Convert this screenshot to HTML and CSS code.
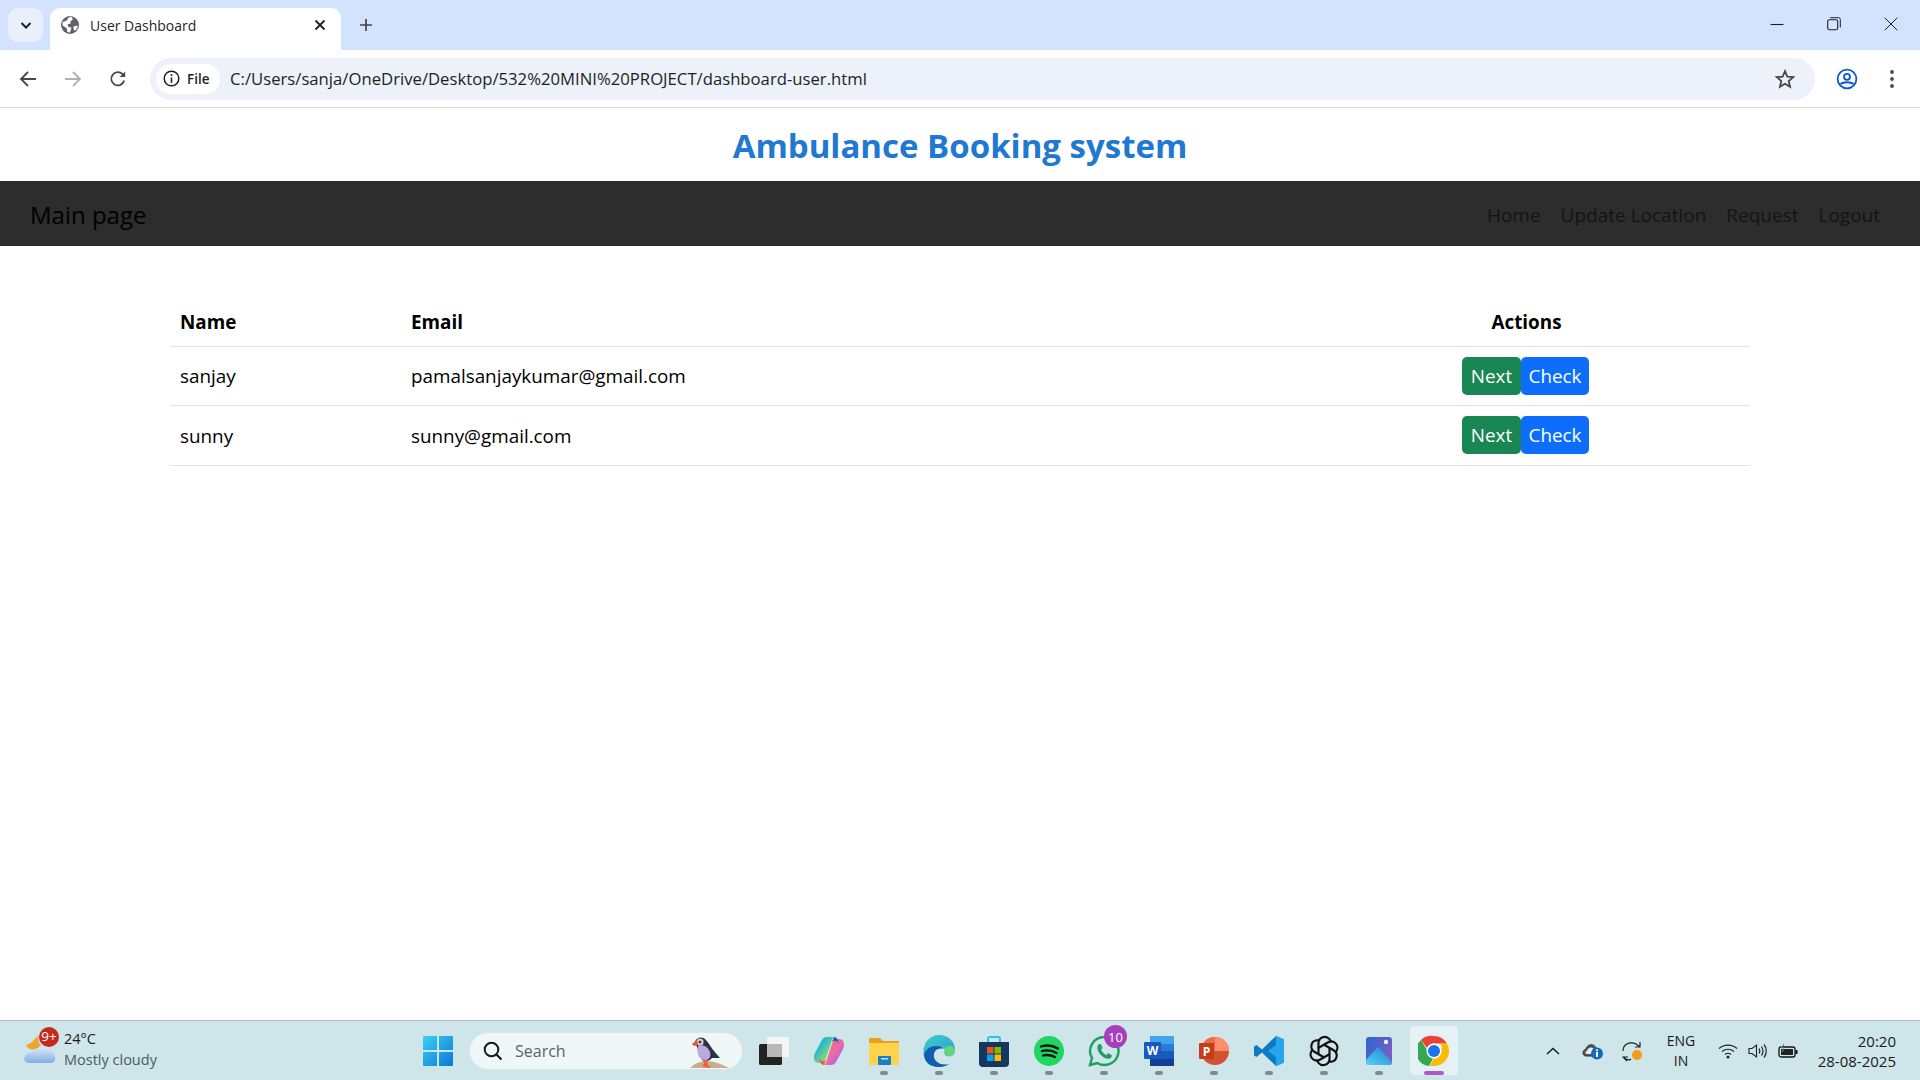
FILE: index.html
```html
<!DOCTYPE html>
<html lang="en">
<head>
<meta charset="utf-8">
<title>User Dashboard</title>
<link rel="stylesheet" href="styles.css">
</head>
<body>
<div class="window">
  <div class="tabstrip">
    <button class="tab-search"><svg width="14" height="14" viewBox="0 0 14 14"><path d="M2.5 5 7 9.5 11.5 5" fill="none" stroke="#1f1f1f" stroke-width="2"/></svg></button>
    <div class="tab">
      <svg class="favicon" width="18" height="18" viewBox="0 0 18 18"><circle cx="9" cy="9" r="9" fill="#5f6368"/><path d="M1.5 6 6 4.5 7 2 10 .5 12 3 9.5 5.5 9.5 7.5 6.5 8.5 7.5 11 10.5 11.5 9 16.5 6.5 16 5.5 12 1.5 9.5ZM12.5 10.5 16.5 9.5 16.5 11.5 14 15 12.5 13Z" fill="#fff"/></svg>
      <span class="tab-title">User Dashboard</span>
      <svg class="tab-close" width="12" height="12" viewBox="0 0 12 12"><path d="M1.5 1.5 10.5 10.5M10.5 1.5 1.5 10.5" stroke="#1f1f1f" stroke-width="1.8"/></svg>
    </div>
    <svg class="newtab" width="14" height="14" viewBox="0 0 14 14"><path d="M7 1V13M1 7H13" stroke="#444" stroke-width="1.7"/></svg>
    <div class="winctl">
      <svg width="14" height="14" viewBox="0 0 14 14"><path d="M.5 7.5H13.5" stroke="#1f1f1f" stroke-width="1.1"/></svg>
      <svg width="14" height="14" viewBox="0 0 14 14"><rect x=".7" y="2.7" width="10" height="10" rx="1.6" fill="none" stroke="#1f1f1f" stroke-width="1.1"/><path d="M3.2 .7H11.5A1.8 1.8 0 0 1 13.3 2.5V10.5" fill="none" stroke="#1f1f1f" stroke-width="1"/></svg>
      <svg width="14" height="14" viewBox="0 0 14 14"><path d="M.7.7 13.3 13.3M13.3.7.7 13.3" stroke="#1f1f1f" stroke-width="1"/></svg>
    </div>
  </div>
  <div class="toolbar">
    <div class="navbtns">
      <svg width="18" height="18" viewBox="0 0 18 18"><path d="M17 9H2M9 2 2 9l7 7" fill="none" stroke="#474747" stroke-width="1.8"/></svg>
      <svg width="18" height="18" viewBox="0 0 18 18"><path d="M1 9H16M9 2l7 7-7 7" fill="none" stroke="#b0b0b0" stroke-width="1.8"/></svg>
      <svg width="18" height="18" viewBox="0 0 18 18"><path d="M15.2 10.6A6.6 6.6 0 1 1 13.6 4.2L15.5 6" fill="none" stroke="#474747" stroke-width="1.8"/><path d="M16.2 1.5V7H10.7Z" fill="#474747"/></svg>
    </div>
    <div class="omnibox">
      <div class="chip">
        <svg width="17" height="17" viewBox="0 0 17 17"><circle cx="8.5" cy="8.5" r="7.3" fill="none" stroke="#1f1f1f" stroke-width="1.5"/><path d="M8.5 7.5V12.8" stroke="#1f1f1f" stroke-width="1.6"/><circle cx="8.5" cy="5" r="1" fill="#1f1f1f"/></svg>
        <span class="chip-label">File</span>
      </div>
      <span class="url">C:/Users/sanja/OneDrive/Desktop/532%20MINI%20PROJECT/dashboard-user.html</span>
      <svg class="star" width="20" height="20" viewBox="0 0 20 20"><path d="M10 2.2 12.3 7.6 18.2 8.1 13.7 12 15.1 17.8 10 14.7 4.9 17.8 6.3 12 1.8 8.1 7.7 7.6Z" fill="none" stroke="#474747" stroke-width="1.8"/></svg>
    </div>
    <svg class="profile" width="22" height="22" viewBox="0 0 22 22"><circle cx="11" cy="11" r="9.4" fill="none" stroke="#0b57d0" stroke-width="1.8"/><circle cx="11" cy="8.8" r="3" fill="none" stroke="#0b57d0" stroke-width="1.8"/><path d="M4.5 16.2C7 13.6 15 13.6 17.5 16.2" fill="none" stroke="#0b57d0" stroke-width="1.8"/></svg>
    <svg class="kebab" width="6" height="20" viewBox="0 0 6 20"><circle cx="3" cy="3" r="1.9" fill="#474747"/><circle cx="3" cy="10" r="1.9" fill="#474747"/><circle cx="3" cy="17" r="1.9" fill="#474747"/></svg>
  </div>

  <main class="page">
    <h1 class="site-title">Ambulance Booking system</h1>
    <nav class="navbar">
      <a class="brand">Main page</a>
      <div class="nav-links">
        <a>Home</a><a>Update Location</a><a>Request</a><a>Logout</a>
      </div>
    </nav>
    <div class="table-wrap">
      <table class="users">
        <thead>
          <tr><th class="c-name">Name</th><th class="c-email">Email</th><th class="c-actions">Actions</th></tr>
        </thead>
        <tbody>
          <tr><td>sanjay</td><td>pamalsanjaykumar@gmail.com</td><td class="actions"><button class="btn green">Next</button><button class="btn blue">Check</button></td></tr>
          <tr><td>sunny</td><td>sunny@gmail.com</td><td class="actions"><button class="btn green">Next</button><button class="btn blue">Check</button></td></tr>
        </tbody>
      </table>
    </div>
  </main>

  <footer class="taskbar">
    <div class="weather">
      <div class="weather-icon">
        <svg width="36" height="30" viewBox="0 0 36 30"><defs><linearGradient id="cl" x1="0" y1="0" x2="0" y2="1"><stop offset="0" stop-color="#d3e4f8"/><stop offset="1" stop-color="#86ade6"/></linearGradient></defs><path d="M17 0C13 3 12 6 7 9L4 10C7 16 14 16 19 10 16 8 16 4 17 0Z" fill="#f0a32f"/><path d="M8 28C3 28 1 25 3 21 4 18 7 17 10 17 12 13 19 12 23 15 27 14 32 17 33 22 34 26 31 28 28 28Z" fill="url(#cl)"/></svg>
        <span class="w-badge">9+</span>
      </div>
      <div class="w-text"><span class="w-temp">24°C</span><span class="w-desc">Mostly cloudy</span></div>
    </div>
    <svg class="start" width="30" height="30" viewBox="0 0 30 30"><defs><linearGradient id="wg" x1="0" y1="0" x2="1" y2="1"><stop offset="0" stop-color="#3bd0f7"/><stop offset="1" stop-color="#0a76d3"/></linearGradient></defs><path d="M1 0H14V14H0V1A1 1 0 0 1 1 0ZM16 0H29A1 1 0 0 1 30 1V14H16ZM0 16H14V30H1A1 1 0 0 1 0 29ZM16 16H30V29A1 1 0 0 1 29 30H16Z" fill="url(#wg)"/></svg>
    <div class="search">
      <svg width="20" height="20" viewBox="0 0 20 20"><circle cx="8.500" cy="8.500" r="6.800" fill="none" stroke="#1a1a1a" stroke-width="2"/><path d="M13.500 13.500 18.500 18.500" stroke="#1a1a1a" stroke-width="2.200"/></svg>
      <span class="search-label">Search</span>
      <svg class="puffin" width="40" height="36" viewBox="0 0 40 36"><path d="M0 35C5 30 10 28 17 28 25 28 33 32 39 35Z" fill="#c9ad8f"/><path d="M5 9C6 4 13 3 16 7 20 12 24 19 30 25L22 25C20 28 15 29 12 27Z" fill="#2b3346"/><path d="M8 13C6 20 9 27 15 27 20 27 22 22 19 17 17 13 12 11 8 13Z" fill="#b9a9e0"/><circle cx="10" cy="9" r="3.600" fill="#d9c9cf"/><circle cx="10" cy="9" r="1.300" fill="#4a2430"/><path d="M7 7 2 11 4 13 8 12Z" fill="#e8562e"/><path d="M13 27H17L18 33H21L19 35 12 33 14 31Z" fill="#ef5f33"/></svg>
    </div>
    <div class="apps">
      <div class="app"><svg width="30" height="28" viewBox="0 0 30 28"><rect x="0" y="7" width="23" height="21" rx="1.500" fill="#232323"/><rect x="8" y="0" width="22" height="20" rx="1.500" fill="#f5f5f5"/><rect x="8" y="7" width="15" height="13" fill="#b9b9b9"/></svg></div>
      <div class="app"><svg width="30" height="28" viewBox="0 0 30 28"><defs><linearGradient id="cp1" x1="0" y1="0" x2="1" y2="1"><stop offset="0" stop-color="#1f6fe0"/><stop offset=".3" stop-color="#21b6d8"/><stop offset=".6" stop-color="#6fd08a"/><stop offset="1" stop-color="#f4d23c"/></linearGradient><linearGradient id="cp2" x1="0" y1="0" x2="1" y2="1"><stop offset="0" stop-color="#8d5cf0"/><stop offset=".5" stop-color="#ee6aa8"/><stop offset="1" stop-color="#f2743a"/></linearGradient></defs><path d="M8 3C9 1 11 0 13 0H20C18 1 18 3 17 6L12 21C11 25 8 26 5 26 1 26 0 23 0 20 0 18 1 16 2 14Z" fill="url(#cp1)"/><path d="M8 3C9 1 11 0 13 0H20C18 1 18 3 17 6L12 21C11 25 8 26 5 26 1 26 0 23 0 20 0 18 1 16 2 14Z" fill="url(#cp2)" transform="rotate(180 15 14)"/><path d="M20 0C23 0 24 3 25 7 23 3 20 3 18 5Z" fill="#1c55c8"/><path d="M10 28C7 28 6 25 5 21 7 25 10 25 12 23Z" fill="#ee5a30"/></svg></div>
      <div class="app run"><svg width="32" height="32" viewBox="0 0 32 32"><path d="M1 3H12L15 6H31V11H1Z" fill="#e8a21a"/><path d="M1 8H31V30H1Z" fill="#fdd34d"/><rect x="10" y="21" width="13" height="9" rx="1" fill="#1b7dc4"/><rect x="13" y="23" width="7" height="1.500" fill="#bfe1f7"/></svg></div>
      <div class="app run"><svg width="32" height="32" viewBox="0 0 32 32"><defs><linearGradient id="edg" x1="0" y1="0" x2="1" y2="1"><stop offset="0" stop-color="#3ad0c7"/><stop offset="1" stop-color="#2e9bd9"/></linearGradient></defs><path d="M16 0C25 0 32 6 32 15 32 21 27 22 24 21 21 20 21 17 22 15 20 11 15 9 10 11 5 13 2 18 1 22 -2 10 6 0 16 0Z" fill="url(#edg)"/><path d="M1 20C3 11 16 7 21 14 14 12 10 17 11 22 12 27 18 31 26 29 20 34 2 34 1 20Z" fill="#0f5fae"/><path d="M21 14C22 17 22 20 25 21 28 22 32 20 32 15 29 8 23 11 21 14Z" fill="#63d676"/></svg></div>
      <div class="app run"><svg width="30" height="32" viewBox="0 0 30 32"><path d="M9 8V4A2 2 0 0 1 11 2H19A2 2 0 0 1 21 4V8" fill="none" stroke="#2bc3ee" stroke-width="2"/><path d="M0 7H30V28A4 4 0 0 1 26 32H4A4 4 0 0 1 0 28Z" fill="#14365f"/><rect x="8" y="12" width="6.500" height="6.500" fill="#f25022"/><rect x="15.500" y="12" width="6.500" height="6.500" fill="#7fba00"/><rect x="8" y="19.500" width="6.500" height="6.500" fill="#00a4ef"/><rect x="15.500" y="19.500" width="6.500" height="6.500" fill="#ffb900"/></svg></div>
      <div class="app run"><svg width="30" height="30" viewBox="0 0 30 30"><circle cx="15" cy="15" r="15" fill="#1ed760"/><path d="M7 10.500C12 9 19 9.500 24 12.500M8 15C12 14 18 14.300 22.500 17M9 19.500C13 18.500 17 19 21 21" fill="none" stroke="#111" stroke-width="2.300" stroke-linecap="round"/></svg></div>
      <div class="app run"><svg width="32" height="32" viewBox="0 0 32 32"><path d="M16 2A14 14 0 0 0 4 23L2 30 9.300 28A14 14 0 1 0 16 2Z" fill="none" stroke="#1f9d64" stroke-width="2.400"/><path d="M11 9C8.500 11 9 15 12 19 15 23 19 24.500 22 23.500 24 22.500 24 20.500 23.500 20L20 18 18.500 20C16.500 19.500 14 17 13 14.500L14.500 13 13 9.300Z" fill="#1f9d64"/></svg><span class="app-badge">10</span></div>
      <div class="app run"><svg width="30" height="32" viewBox="0 0 30 32"><rect x="6" y="1" width="24" height="30" rx="1" fill="#2b7cd3"/><rect x="6" y="1" width="24" height="8" fill="#41a5ee"/><rect x="6" y="16" width="24" height="8" fill="#185abd"/><rect x="6" y="24" width="24" height="7" fill="#103f91"/><rect x="0" y="7" width="17" height="17" rx="1" fill="#185abd"/><text x="8.500" y="20" class="icon-letter">W</text></svg></div>
      <div class="app run"><svg width="30" height="32" viewBox="0 0 30 32"><circle cx="16" cy="16" r="14" fill="#d35230"/><path d="M16 2A14 14 0 0 1 30 16H16Z" fill="#ff8f6b"/><path d="M16 2A14 14 0 0 0 2 16H16Z" fill="#ed6c47"/><rect x="0" y="8" width="15" height="16" rx="1" fill="#c43e1c"/><text x="7.500" y="20.500" class="icon-letter">P</text></svg></div>
      <div class="app run"><svg width="30" height="32" viewBox="0 0 30 32"><path d="M22 1 30 4.500V27.500L22 31 8 17.500 2.500 22 0 20.500V11.500L2.500 10 8 14.500Z" fill="#0d7ac4"/><path d="M22 1 30 4.500V27.500L22 31V22L14 16 22 10Z" fill="#25a5ec"/></svg></div>
      <div class="app run"><svg width="32" height="32" viewBox="0 0 32 32"><g fill="none" stroke="#111" stroke-width="2.100" stroke-linecap="round"><path d="M10.500 19V8A6.200 6.200 0 0 1 21.500 4.200L23 6.500"/><path d="M10.500 19V8A6.200 6.200 0 0 1 21.500 4.200L23 6.500" transform="rotate(60 16 16)"/><path d="M10.500 19V8A6.200 6.200 0 0 1 21.500 4.200L23 6.500" transform="rotate(120 16 16)"/><path d="M10.500 19V8A6.200 6.200 0 0 1 21.500 4.200L23 6.500" transform="rotate(180 16 16)"/><path d="M10.500 19V8A6.200 6.200 0 0 1 21.500 4.200L23 6.500" transform="rotate(240 16 16)"/><path d="M10.500 19V8A6.200 6.200 0 0 1 21.500 4.200L23 6.500" transform="rotate(300 16 16)"/></g></svg></div>
      <div class="app run"><svg width="26" height="28" viewBox="0 0 26 28"><defs><linearGradient id="ph" x1="0" y1="0" x2="1" y2=".7"><stop offset="0" stop-color="#2a66cf"/><stop offset="1" stop-color="#7e5cc6"/></linearGradient><linearGradient id="ph2" x1="0" y1="1" x2="1" y2="0"><stop offset="0" stop-color="#55d3f2"/><stop offset="1" stop-color="#1f7fd8"/></linearGradient></defs><rect width="26" height="28" rx="3" fill="url(#ph)"/><circle cx="20" cy="5" r="2.200" fill="#f0f0f8"/><path d="M0 23 12 10 26 25A3 3 0 0 1 23 28H3A3 3 0 0 1 0 25Z" fill="url(#ph2)"/></svg></div>
      <div class="app active"><svg width="32" height="32" viewBox="0 0 32 32"><path d="M16 1A15 15 0 0 1 29 8.500H16A7.500 7.500 0 0 0 9 13L3 4.900A15 15 0 0 1 16 1Z" fill="#ea4335"/><path d="M3 4.900 9.500 16A6.500 6.500 0 0 0 15 23.500L11 31A15 15 0 0 1 3 4.900Z" fill="#34a853"/><path d="M29 8.500A15 15 0 0 1 16 31H11.500L18 20A7 7 0 0 0 22 8.500Z" fill="#fbbc04"/><circle cx="16" cy="16" r="7.500" fill="#fff"/><circle cx="16" cy="16" r="6" fill="#1a73e8"/></svg></div>
    </div>
    <div class="tray">
      <div class="tray-slot"><svg width="14" height="8" viewBox="0 0 14 8"><path d="M1 7 7 1.500 13 7" fill="none" stroke="#1a1a1a" stroke-width="1.500"/></svg></div>
      <div class="tray-slot"><svg width="22" height="18" viewBox="0 0 22 18"><path d="M4 14C0 14 0 8 4 7 5 2 12 1 14 6 15 6 16 7 16 8V14Z" fill="#555" stroke="#333"/><path d="M5 12C3 12 3 9 5 9 6 5 11 4 12 8V12Z" fill="#eee"/><circle cx="15" cy="11.500" r="6" fill="#0f6cbd"/><rect x="14" y="10" width="2" height="5" fill="#fff"/><rect x="14" y="7.500" width="2" height="1.700" fill="#fff"/></svg></div>
      <div class="tray-slot"><svg width="22" height="22" viewBox="0 0 22 22"><path d="M1 11C1 4 8 1 14 4L18 7M18 2V7H13" fill="none" stroke="#222" stroke-width="1.200"/><path d="M5 21 1 17H6M1 17 4 19C6 20 8 20 9 19" fill="none" stroke="#222" stroke-width="1.200"/><circle cx="15" cy="15" r="5" fill="#f59a14"/></svg></div>
      <div class="tray-lang"><span>ENG</span><span>IN</span></div>
      <div class="tray-icon"><svg width="20" height="16" viewBox="0 0 20 16"><path d="M1 5.500C6 1 14 1 19 5.500M4 8.500C7.500 5.500 12.500 5.500 16 8.500M7 11.500C8.800 10 11.200 10 13 11.500" fill="none" stroke="#222" stroke-width="1.200"/><circle cx="10" cy="14" r="1.500" fill="#222"/></svg></div>
      <div class="tray-icon"><svg width="20" height="16" viewBox="0 0 20 16"><path d="M1 5.500H4L8.500 2V14L4 10.500H1Z" fill="none" stroke="#222" stroke-width="1.100"/><path d="M11 5.500C12 7 12 9 11 10.500M13.500 3.500C15.500 6 15.500 10 13.500 12.500M16 1.500C19 5 19 11 16 14.500" fill="none" stroke="#222" stroke-width="1.200"/></svg></div>
      <div class="tray-icon"><svg width="20" height="16" viewBox="0 0 20 16"><rect x="1" y="4" width="16" height="10" rx="2" fill="none" stroke="#111" stroke-width="1.300"/><rect x="3" y="6" width="12" height="6" fill="#222"/><rect x="17.500" y="7" width="2" height="4" fill="#111"/><path d="M6 0 3 5H6L4 9" fill="#111" stroke="#cee5ea" stroke-width=".6"/></svg></div>
      <div class="clock"><span>20:20</span><span>28-08-2025</span></div>
    </div>
  </footer>
</div>
</body>
</html>
```
FILE: styles.css
```css
* { box-sizing: border-box; }
html, body { margin: 0; padding: 0; height: 100%; }
body { font-family: "Open Sans", "Noto Sans", sans-serif; color: #000; background: #fff; overflow: hidden; }
.window { display: flex; flex-direction: column; height: 1080px; }

/* browser chrome */
.tabstrip { display: flex; align-items: flex-end; height: 50px; background: #d3e3fd; flex: none; }
.tab-search { width: 35px; height: 34px; margin: 0 7px 8px 8px; padding: 0; border: 0; border-radius: 10px; background: #e9f0fc; display: flex; align-items: center; justify-content: center; }
.tab { width: 291px; height: 42px; background: #fff; border-radius: 10px 10px 0 0; display: flex; align-items: center; padding: 0 15px 8px 11px; margin-right: 18px; }
.favicon { flex: none; margin-right: 11px; }
.tab-title { font-size: 14px; color: #1f1f1f; white-space: nowrap; flex: 1; }
.tab-close { flex: none; }
.newtab { margin-bottom: 18px; flex: none; }
.winctl { margin-left: auto; display: flex; gap: 43px; padding-right: 22px; align-self: flex-start; padding-top: 17px; }
.winctl svg { display: block; }

.toolbar { height: 58px; background: #fff; border-bottom: 1px solid #dcdcdc; flex: none; display: flex; align-items: center; border-radius: 10px 10px 0 0; padding-left: 19px; }
.navbtns { display: flex; gap: 27px; margin-right: 23px; }
.navbtns svg { display: block; }
.omnibox { width: 1665px; height: 42px; border-radius: 21px; background: #ecf1fa; display: flex; align-items: center; padding: 0 20px 0 6px; flex: none; }
.chip { width: 64px; height: 30px; border-radius: 15px; background: #fff; display: flex; align-items: center; padding-left: 7px; gap: 7px; flex: none; }
.chip-label { font-size: 13.500px; font-weight: 600; color: #1f1f1f; }
.url { font-size: 16.700px; color: #1f1f1f; margin-left: 10px; white-space: nowrap; flex: 1; }
.star { flex: none; }
.profile { margin-left: 21px; flex: none; }
.kebab { margin-left: 31px; flex: none; }

/* page */
.page { flex: 1; background: #fff; min-height: 0; }
.site-title { margin: 0; height: 73px; padding-top: 2px; display: flex; align-items: center; justify-content: center; font-size: 33px; font-weight: 700; color: #1f78d1; line-height: 1; }
.navbar { height: 65px; background: #2d2d2d; display: flex; align-items: center; justify-content: space-between; padding: 0 40px 0 30px; }
.brand { font-size: 24px; color: #000; padding-top: 1px; }
.nav-links { display: flex; gap: 20px; padding-top: 2px; }
.nav-links a { font-size: 19px; color: #141414; }
.table-wrap { padding: 46px 170px 0; }
.users { width: 100%; border-collapse: collapse; font-size: 18.850px; table-layout: fixed; }
.users th { font-weight: 700; text-align: left; padding: 6px 10px 0; height: 54px; border-bottom: 1.500px solid #dee2e6; }
.users td { padding: 1px 10px 0; height: 59.500px; border-bottom: 1.500px solid #dee2e6; vertical-align: middle; }
.c-name { width: 231px; }
.c-email { width: 1060px; }
.users .c-actions { text-align: center; width: 289px; padding: 6px 158px 0 0; }
.users .actions { padding: 0 0 0 1px; }
.btn { font: inherit; color: #fff; border: 0; height: 38px; padding: 0; border-radius: 5px; vertical-align: middle; }
.green { background: #198754; width: 59px; }
.blue { background: #0d6efd; width: 68px; }

/* taskbar */
.taskbar { height: 60px; flex: none; background: #cee5ea; border-top: 1px solid #aebfc6; display: flex; align-items: center; }
.weather { width: 423px; flex: none; display: flex; align-items: center; padding-left: 22px; }
.weather-icon { position: relative; width: 42px; height: 44px; flex: none; display: flex; align-items: flex-start; padding-top: 6px; }
.w-badge { position: absolute; left: 17px; top: -2px; width: 20px; height: 20px; border-radius: 50%; background: #c42b1c; color: #fff; font-size: 13.500px; line-height: 1; display: flex; align-items: center; justify-content: center; }
.w-text { display: flex; flex-direction: column; line-height: 21px; margin-top: -3px; }
.w-temp { font-size: 14.500px; color: #1a1a1a; }
.w-desc { font-size: 14.500px; color: #4d5a5e; }
.start { flex: none; margin-right: 16px; }
.search { width: 274px; height: 38px; flex: none; border-radius: 19px; background: #eff7f9; border: 1px solid #d9e6e9; display: flex; align-items: center; padding: 0 12px 0 13px; }
.search-label { font-size: 16px; color: #5a6468; margin-left: 12px; flex: 1; }
.apps { display: flex; margin-left: 3px; align-self: stretch; }
.app { position: relative; width: 55px; display: flex; align-items: center; justify-content: center; }
.run::after { content: ""; position: absolute; left: 24px; bottom: 5px; width: 8px; height: 4px; border-radius: 2px; background: #7d8a8e; }
.active::before { content: ""; position: absolute; left: 4px; right: 3px; top: 5px; bottom: 5px; background: #e6f1f6; border-radius: 4px; }
.active svg { position: relative; }
.active::after { content: ""; position: absolute; left: 18px; bottom: 5px; width: 20px; height: 4px; border-radius: 2px; background: #a95cc9; }
.app-badge { position: absolute; left: 28px; top: 4px; width: 23px; height: 23px; border-radius: 50%; background: #a63fbd; color: #fff; font-size: 13px; display: flex; align-items: center; justify-content: center; }
.icon-letter { font-family: "Open Sans", sans-serif; font-size: 12px; font-weight: 700; fill: #fff; text-anchor: middle; }
.tray { margin-left: auto; display: flex; align-items: center; padding-right: 24px; }
.tray-slot { width: 40px; display: flex; justify-content: center; }
.tray-lang { width: 56px; margin-right: 4px; display: flex; flex-direction: column; align-items: center; font-size: 14px; line-height: 20px; color: #1a1a1a; }
.tray-icon { width: 30px; display: flex; justify-content: center; }
.clock { width: 93px; display: flex; flex-direction: column; align-items: flex-end; font-size: 15px; line-height: 20px; color: #1a1a1a; white-space: nowrap; }
```
